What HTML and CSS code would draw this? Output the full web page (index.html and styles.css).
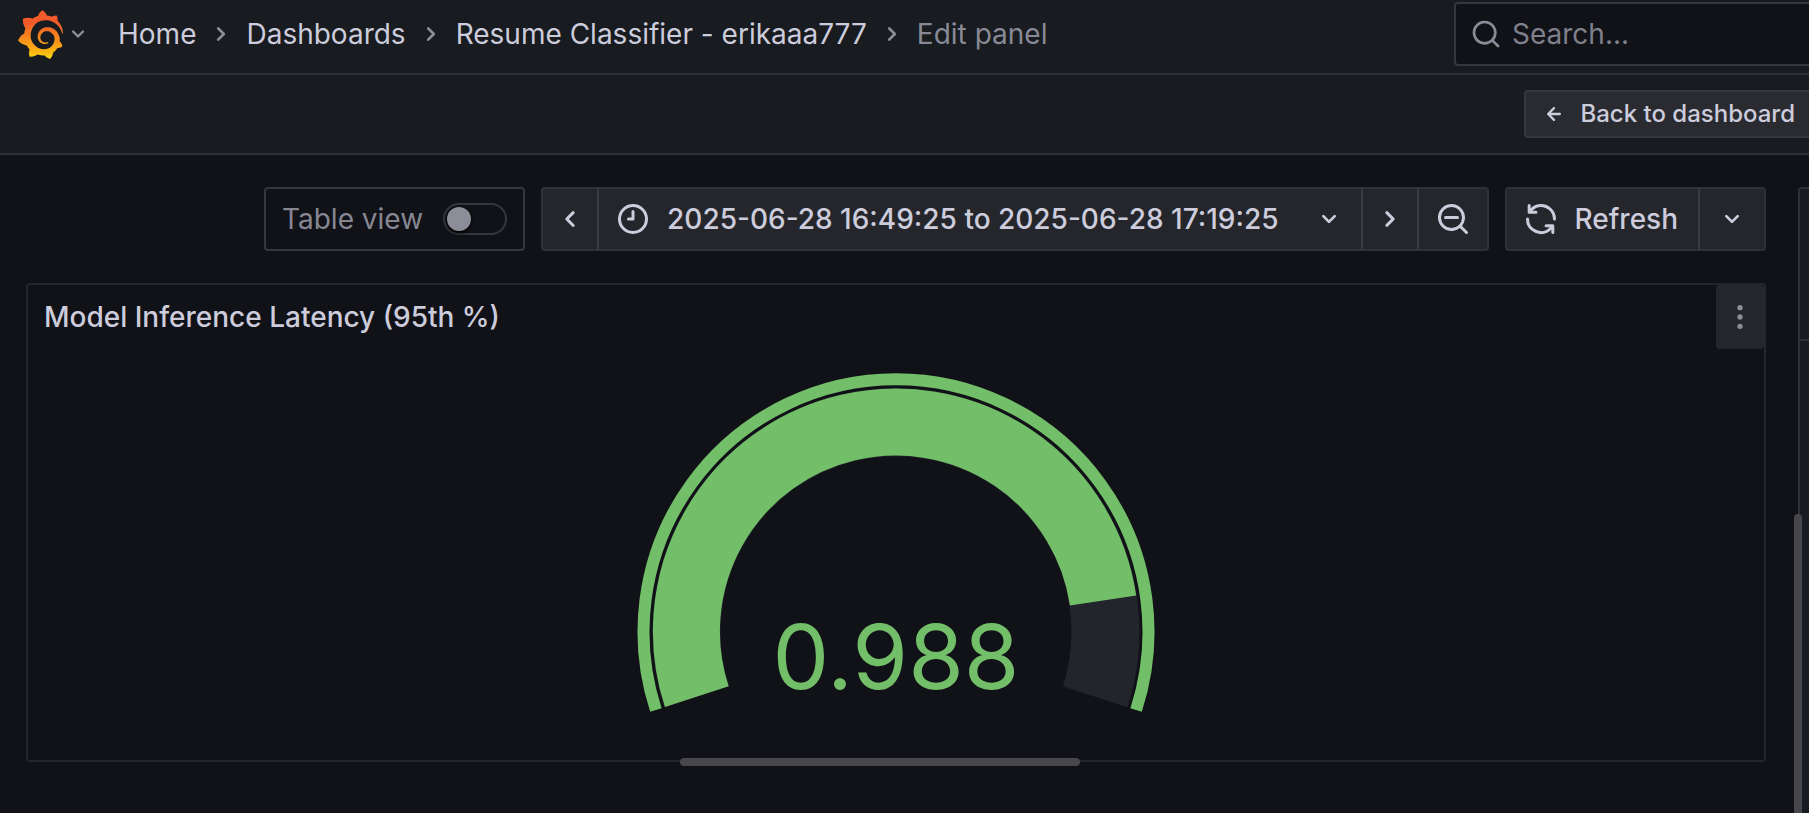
FILE: index.html
```html
<!DOCTYPE html>
<html lang="en">
<head>
<meta charset="utf-8">
<meta name="viewport" content="width=device-width, initial-scale=1">
<title>Edit panel - Resume Classifier - Grafana</title>
<link rel="stylesheet" href="styles.css">
</head>
<body>
<svg class="sprite" aria-hidden="true">
  <symbol id="angle-down" viewBox="0 0 24 24"><path d="M17,9.17a1,1,0,0,0-1.41,0L12,12.71,8.46,9.17a1,1,0,0,0-1.41,0,1,1,0,0,0,0,1.42l4.24,4.24a1,1,0,0,0,1.42,0L17,10.59A1,1,0,0,0,17,9.17Z"/></symbol>
  <symbol id="angle-right" viewBox="0 0 24 24"><path d="M14.83,11.29,10.59,7.05a1,1,0,0,0-1.42,0,1,1,0,0,0,0,1.41L12.71,12,9.17,15.54a1,1,0,0,0,0,1.41,1,1,0,0,0,.71.29,1,1,0,0,0,.71-.29l4.24-4.24A1,1,0,0,0,14.83,11.29Z"/></symbol>
  <symbol id="angle-left" viewBox="0 0 24 24"><path d="M11.29,12l3.54-3.54a1,1,0,0,0,0-1.41,1,1,0,0,0-1.42,0L9.17,11.29a1,1,0,0,0,0,1.42L13.41,17a1,1,0,0,0,.71.29,1,1,0,0,0,.71-.29,1,1,0,0,0,0-1.41Z"/></symbol>
  <symbol id="search" viewBox="0 0 24 24"><path d="M21.71,20.29,18,16.61A9,9,0,1,0,16.61,18l3.68,3.68a1,1,0,0,0,1.42,0A1,1,0,0,0,21.71,20.29ZM11,18a7,7,0,1,1,7-7A7,7,0,0,1,11,18Z"/></symbol>
  <symbol id="search-minus" viewBox="0 0 24 24"><path d="M21.71,20.29,18,16.61A9,9,0,1,0,16.61,18l3.68,3.68a1,1,0,0,0,1.42,0A1,1,0,0,0,21.71,20.29ZM11,18a7,7,0,1,1,7-7A7,7,0,0,1,11,18Zm4-8H7a1,1,0,0,0,0,2h8a1,1,0,0,0,0-2Z"/></symbol>
  <symbol id="clock" viewBox="0 0 24 24"><path d="M12,6a1,1,0,0,0-1,1v4H9a1,1,0,0,0,0,2h3a1,1,0,0,0,1-1V7A1,1,0,0,0,12,6Zm0-4A10,10,0,1,0,22,12,10,10,0,0,0,12,2Zm0,18a8,8,0,1,1,8-8A8,8,0,0,1,12,20Z"/></symbol>
  <symbol id="sync" viewBox="0 0 24 24"><path d="M19.91,15.51H15.38a1,1,0,0,0,0,2h2.4A8,8,0,0,1,4,12a1,1,0,1,0-2,0,10,10,0,0,0,16.88,7.23V21a1,1,0,0,0,2,0V16.5A1,1,0,0,0,19.91,15.51ZM12,2A10,10,0,0,0,5.12,4.77V3a1,1,0,0,0-2,0V7.5a1,1,0,0,0,1,1h4.5a1,1,0,0,0,0-2H6.22A8,8,0,0,1,20,12a1,1,0,0,0,2,0A10,10,0,0,0,12,2Z"/></symbol>
  <symbol id="arrow-left" viewBox="0 0 24 24"><path d="M17,11H9.41l3.3-3.29a1,1,0,1,0-1.42-1.42l-5,5a1,1,0,0,0-.21.33,1,1,0,0,0,0,.76,1,1,0,0,0,.21.33l5,5a1,1,0,0,0,1.42,0,1,1,0,0,0,0-1.42L9.41,13H17a1,1,0,0,0,0-2Z"/></symbol>
  <symbol id="ellipsis" viewBox="0 0 24 24"><circle cx="12" cy="5" r="2"/><circle cx="12" cy="12" r="2"/><circle cx="12" cy="19" r="2"/></symbol>
</svg>

<header class="topbar">
  <button class="home-menu" type="button" aria-label="Open menu">
    <svg class="logo" viewBox="0 0 351 365" aria-hidden="true">
      <defs><linearGradient id="flame" gradientUnits="userSpaceOnUse" x1="175" y1="390" x2="175" y2="100"><stop offset="0" stop-color="#fcee1f"/><stop offset="0.25" stop-color="#fbb910"/><stop offset="1" stop-color="#f15b2a"/></linearGradient></defs>
      <path fill="url(#flame)" d="M342,161.2c-0.6-6.1-1.6-13.1-3.6-20.9c-2-7.7-5-16.2-9.4-25c-4.4-8.8-10.1-17.9-17.5-26.8c-2.9-3.5-6.1-6.9-9.5-10.2c5.1-20.3-6.2-37.9-6.2-37.9c-19.5-1.2-31.9,6.1-36.5,9.4c-0.8-0.3-1.5-0.7-2.3-1c-3.3-1.3-6.7-2.6-10.3-3.7c-3.5-1.1-7.1-2.1-10.8-3c-3.7-0.9-7.4-1.6-11.2-2.2c-0.7-0.1-1.3-0.2-2-0.3c-8.5-27.2-32.9-38.6-32.9-38.6c-27.3,17.3-32.4,41.5-32.4,41.5s-0.1,0.5-0.3,1.4c-1.5,0.4-3,0.9-4.5,1.3c-2.1,0.6-4.2,1.4-6.2,2.2c-2.1,0.8-4.1,1.6-6.2,2.5c-4.1,1.8-8.2,3.8-12.2,6c-3.9,2.2-7.7,4.6-11.4,7.1c-0.5-0.2-1-0.4-1-0.4c-37.8-14.4-71.3,2.9-71.3,2.9c-3.1,40.2,15.1,65.5,18.7,70.1c-0.9,2.5-1.7,5-2.5,7.5c-2.8,9.1-4.9,18.4-6.2,28.1c-0.2,1.4-0.4,2.8-0.5,4.2C18.8,192.7,8.5,228,8.5,228c29.1,33.5,63.1,35.6,63.1,35.6c0,0,0.1-0.1,0.1-0.1c4.3,7.7,9.3,15,14.9,21.9c2.4,2.9,4.8,5.6,7.4,8.3c-10.6,30.4,1.5,55.6,1.5,55.6c32.4,1.2,53.7-14.2,58.2-17.7c3.2,1.1,6.5,2.1,9.8,2.9c10,2.6,20.2,4.1,30.4,4.5c2.5,0.1,5.1,0.2,7.6,0.1l1.2,0l0.8,0l1.6,0l1.6-0.1l0,0.1c15.3,21.8,42.1,24.9,42.1,24.9c19.1-20.1,20.2-40.1,20.2-44.4l0,0c0,0,0-0.1,0-0.3c0-0.4,0-0.6,0-0.6l0,0c0-0.3,0-0.6,0-0.9c4-2.8,7.8-5.8,11.4-9.1c7.6-6.9,14.3-14.8,19.9-23.3c0.5-0.8,1-1.6,1.5-2.4c21.6,1.2,36.9-13.4,36.9-13.4c-3.6-22.5-16.4-33.5-19.1-35.6l0,0c0,0-0.1-0.1-0.3-0.2c-0.2-0.1-0.2-0.2-0.2-0.2c0,0,0,0,0,0c-0.1-0.1-0.3-0.2-0.5-0.3c0.1-1.4,0.2-2.7,0.3-4.1c0.2-2.4,0.2-4.9,0.2-7.3l0-1.8l0-0.9l0-0.5c0-0.6,0-0.4,0-0.6l-0.1-1.5l-0.1-2c0-0.7-0.1-1.3-0.2-1.9c-0.1-0.6-0.1-1.3-0.2-1.9l-0.2-1.9l-0.3-1.9c-0.4-2.5-0.8-4.9-1.4-7.4c-2.3-9.7-6.1-18.9-11-27.2c-5-8.3-11.2-15.6-18.3-21.8c-7-6.2-14.9-11.2-23.1-14.9c-8.3-3.7-16.9-6.1-25.5-7.2c-4.3-0.6-8.6-0.8-12.9-0.7l-1.6,0l-0.4,0c-0.1,0-0.6,0-0.5,0l-0.7,0l-1.6,0.1c-0.6,0-1.2,0.1-1.7,0.1c-2.2,0.2-4.4,0.5-6.5,0.9c-8.6,1.6-16.7,4.7-23.8,9c-7.1,4.3-13.3,9.6-18.3,15.6c-5,6-8.9,12.7-11.6,19.6c-2.7,6.9-4.2,14.1-4.6,21c-0.1,1.7-0.1,3.5-0.1,5.2c0,0.4,0,0.9,0,1.3l0.1,1.4c0.1,0.8,0.1,1.7,0.2,2.5c0.3,3.5,1,6.9,1.9,10.1c1.9,6.5,4.9,12.4,8.6,17.4c3.7,5,8.2,9.1,12.9,12.4c4.7,3.2,9.8,5.5,14.8,7c5,1.5,10,2.1,14.7,2.1c0.6,0,1.2,0,1.7,0c0.3,0,0.6,0,0.9,0c0.3,0,0.6,0,0.9-0.1c0.5,0,1-0.1,1.5-0.1c0.1,0,0.3,0,0.4-0.1l0.5-0.1c0.3,0,0.6-0.1,0.9-0.1c0.6-0.1,1.1-0.2,1.7-0.3c0.6-0.1,1.1-0.2,1.6-0.4c1.1-0.2,2.1-0.6,3.1-0.9c2-0.7,4-1.5,5.7-2.4c1.8-0.9,3.4-2,5-3c0.4-0.3,0.9-0.6,1.3-1c1.6-1.3,1.9-3.7,0.6-5.3c-1.1-1.4-3.1-1.8-4.7-0.9c-0.4,0.2-0.8,0.4-1.2,0.6c-1.4,0.7-2.8,1.3-4.3,1.8c-1.5,0.5-3.1,0.9-4.7,1.2c-0.8,0.1-1.6,0.2-2.5,0.3c-0.4,0-0.8,0.1-1.3,0.1c-0.4,0-0.9,0-1.2,0c-0.4,0-0.8,0-1.2,0c-0.5,0-1,0-1.5-0.1c0,0-0.3,0-0.1,0l-0.2,0l-0.3,0c-0.2,0-0.5,0-0.7-0.1c-0.5-0.1-0.9-0.1-1.4-0.2c-3.7-0.5-7.4-1.6-10.9-3.2c-3.6-1.6-7-3.8-10.1-6.6c-3.1-2.8-5.8-6.1-7.9-9.9c-2.1-3.8-3.6-8-4.3-12.4c-0.3-2.2-0.5-4.5-0.4-6.7c0-0.6,0.1-1.2,0.1-1.8c0,0.2,0-0.1,0-0.1l0-0.2l0-0.5c0-0.3,0.1-0.6,0.1-0.9c0.1-1.2,0.3-2.4,0.5-3.6c1.7-9.6,6.5-19,13.9-26.1c1.9-1.8,3.9-3.4,6-4.9c2.1-1.5,4.4-2.8,6.8-3.9c2.4-1.1,4.8-2,7.4-2.7c2.5-0.7,5.1-1.1,7.8-1.4c1.3-0.1,2.6-0.2,4-0.2c0.4,0,0.6,0,0.9,0l1.1,0l0.7,0c0.3,0,0,0,0.1,0l0.3,0l1.1,0.1c2.9,0.2,5.7,0.6,8.5,1.3c5.6,1.2,11.1,3.3,16.2,6.1c10.2,5.7,18.9,14.5,24.2,25.1c2.7,5.3,4.6,11,5.5,16.9c0.2,1.5,0.4,3,0.5,4.5l0.1,1.1l0.1,1.1c0,0.4,0,0.8,0,1.1c0,0.4,0,0.8,0,1.1l0,1l0,1.1c0,0.7-0.1,1.9-0.1,2.6c-0.1,1.6-0.3,3.3-0.5,4.9c-0.2,1.6-0.5,3.2-0.8,4.8c-0.3,1.6-0.7,3.2-1.1,4.7c-0.8,3.1-1.8,6.2-3,9.3c-2.4,6-5.6,11.8-9.4,17.1c-7.7,10.6-18.2,19.2-30.2,24.7c-6,2.7-12.3,4.7-18.8,5.7c-3.2,0.6-6.5,0.9-9.8,1l-0.6,0l-0.5,0l-1.1,0l-1.6,0l-0.8,0c0.4,0-0.1,0-0.1,0l-0.3,0c-1.8,0-3.5-0.1-5.3-0.3c-7-0.5-13.9-1.8-20.7-3.7c-6.7-1.9-13.2-4.6-19.4-7.8c-12.3-6.6-23.4-15.6-32-26.5c-4.3-5.4-8.1-11.3-11.2-17.4c-3.1-6.1-5.6-12.6-7.4-19.1c-1.8-6.6-2.9-13.3-3.4-20.1l-0.1-1.3l0-0.3l0-0.3l0-0.6l0-1.1l0-0.3l0-0.4l0-0.8l0-1.6l0-0.3c0,0,0,0.1,0-0.1l0-0.6c0-0.8,0-1.7,0-2.5c0.1-3.3,0.4-6.8,0.8-10.2c0.4-3.4,1-6.9,1.7-10.3c0.7-3.4,1.5-6.8,2.5-10.2c1.9-6.7,4.3-13.2,7.1-19.3c5.7-12.2,13.1-23.1,22-31.8c2.2-2.2,4.5-4.2,6.9-6.2c2.4-1.9,4.9-3.7,7.5-5.4c2.5-1.7,5.2-3.2,7.9-4.6c1.3-0.7,2.7-1.4,4.1-2c0.7-0.3,1.4-0.6,2.1-0.9c0.7-0.3,1.4-0.6,2.1-0.9c2.8-1.2,5.7-2.2,8.7-3.1c0.7-0.2,1.5-0.4,2.2-0.7c0.7-0.2,1.5-0.4,2.2-0.6c1.5-0.4,3-0.8,4.5-1.1c0.7-0.2,1.5-0.3,2.3-0.5c0.8-0.2,1.5-0.3,2.3-0.5c0.8-0.1,1.5-0.3,2.3-0.4l1.1-0.2l1.2-0.2c0.8-0.1,1.5-0.2,2.3-0.3c0.9-0.1,1.7-0.2,2.6-0.3c0.7-0.1,1.9-0.2,2.6-0.3c0.5-0.1,1.1-0.1,1.6-0.2l1.1-0.1l0.5-0.1l0.6,0c0.9-0.1,1.7-0.1,2.6-0.2l1.3-0.1c0,0,0.5,0,0.1,0l0.3,0l0.6,0c0.7,0,1.5-0.1,2.2-0.1c2.9-0.1,5.9-0.1,8.8,0c5.8,0.2,11.5,0.9,17,1.9c11.1,2.1,21.5,5.6,31,10.3c9.5,4.6,17.9,10.3,25.3,16.5c0.5,0.4,0.9,0.8,1.4,1.2c0.4,0.4,0.9,0.8,1.3,1.2c0.9,0.8,1.7,1.6,2.6,2.4c0.9,0.8,1.7,1.6,2.5,2.4c0.8,0.8,1.6,1.6,2.4,2.5c3.1,3.3,6,6.6,8.6,10c5.2,6.7,9.4,13.5,12.7,19.9c0.2,0.4,0.4,0.8,0.6,1.2c0.2,0.4,0.4,0.8,0.6,1.2c0.4,0.8,0.8,1.6,1.1,2.4c0.4,0.8,0.7,1.5,1.1,2.3c0.3,0.8,0.7,1.5,1,2.3c1.2,3,2.4,5.9,3.3,8.6c1.5,4.4,2.6,8.3,3.5,11.7c0.3,1.4,1.6,2.3,3,2.1c1.5-0.1,2.6-1.3,2.6-2.8C342.6,170.4,342.5,166.1,342,161.2z"/>
    </svg>
    <svg class="icon icon-sm"><use href="#angle-down"/></svg>
  </button>
  <nav class="crumbs" aria-label="Breadcrumbs">
    <a class="crumb" href="#home">Home</a>
    <svg class="icon icon-md"><use href="#angle-right"/></svg>
    <a class="crumb" href="#dashboards">Dashboards</a>
    <svg class="icon icon-md"><use href="#angle-right"/></svg>
    <a class="crumb" href="#dashboard">Resume Classifier - erikaaa777</a>
    <svg class="icon icon-md"><use href="#angle-right"/></svg>
    <span class="crumb crumb-current" aria-current="page">Edit panel</span>
  </nav>
  <label class="search">
    <svg class="icon icon-md"><use href="#search"/></svg>
    <input class="search-input" type="text" placeholder="Search..." aria-label="Search">
  </label>
</header>

<div class="actionbar">
  <button class="back" type="button"><svg class="icon icon-sm"><use href="#arrow-left"/></svg>Back to dashboard</button>
</div>

<div class="editor">
  <main class="main">
    <div class="toolbar">
      <label class="table-view">Table view<input class="switch" type="checkbox" role="switch"></label>
      <div class="group">
        <button class="btn btn-step" type="button" aria-label="Move time range backwards"><svg class="icon icon-lg"><use href="#angle-left"/></svg></button>
        <button class="btn btn-range" type="button"><svg class="icon icon-lg"><use href="#clock"/></svg><span class="range">2025-06-28 16:49:25 to 2025-06-28 17:19:25</span><svg class="icon icon-md"><use href="#angle-down"/></svg></button>
        <button class="btn btn-step" type="button" aria-label="Move time range forwards"><svg class="icon icon-lg"><use href="#angle-right"/></svg></button>
        <button class="btn btn-zoom" type="button" aria-label="Zoom out time range"><svg class="icon icon-lg"><use href="#search-minus"/></svg></button>
      </div>
      <div class="group">
        <button class="btn btn-refresh" type="button"><svg class="icon icon-lg"><use href="#sync"/></svg>Refresh</button>
        <button class="btn btn-interval" type="button" aria-label="Auto refresh interval"><svg class="icon icon-md"><use href="#angle-down"/></svg></button>
      </div>
    </div>

    <section class="panel">
      <div class="panel-head">
        <h2 class="panel-title">Model Inference Latency (95th %)</h2>
        <button class="panel-menu" type="button" aria-label="Panel menu"><svg class="icon icon-md"><use href="#ellipsis"/></svg></button>
      </div>
      <div class="panel-body">
        <svg class="gauge" viewBox="-260 -283 520 411" role="img" aria-label="Gauge reading 0.988">
          <path class="gauge-ring" d="M-240.1 78A252.5 252.5 0 1 1 240.1 78"/>
          <path class="gauge-track" d="M-199.2 64.7A209.5 209.5 0 1 1 199.2 64.7"/>
          <path class="gauge-fill" d="M-199.2 64.7A209.5 209.5 0 1 1 207.1 -31.5"/>
          <text class="gauge-value" x="0" y="57">0.988</text>
        </svg>
      </div>
      <div class="splitter-h"></div>
    </section>
  </main>
  <aside class="options">
    <div class="options-head"></div>
    <div class="splitter-v"></div>
  </aside>
</div>
</body>
</html>
```

FILE: styles.css
```css
:root {
  --canvas: #111217;
  --primary: #181b1f;
  --text: rgb(204, 204, 220);
  --muted: rgba(204, 204, 220, 0.65);
  --line: rgba(204, 204, 220, 0.12);
  --line-medium: rgba(204, 204, 220, 0.2);
  --button: #24262b;
  --button-line: #303137;
  --green: #73bf69;
}

* {
  box-sizing: border-box;
}

body {
  margin: 0;
  min-height: 100vh;
  display: flex;
  flex-direction: column;
  overflow: hidden;
  background: var(--canvas);
  color: var(--text);
  font: 400 28px/44px Inter, "Liberation Sans", sans-serif;
}

button,
input {
  margin: 0;
  font: inherit;
  color: inherit;
}

.sprite {
  display: none;
}

.icon {
  flex: none;
  display: block;
  fill: currentColor;
}

.icon-sm {
  width: 28px;
  height: 28px;
}

.icon-md {
  width: 32px;
  height: 32px;
}

.icon-lg {
  width: 36px;
  height: 36px;
}

/* Top bar */
.topbar {
  display: flex;
  align-items: center;
  padding: 2px 0 7px 17px;
  background: var(--primary);
  border-bottom: 2px solid var(--line);
}

.home-menu {
  display: flex;
  align-items: center;
  padding: 0;
  border: 0;
  background: none;
  color: var(--muted);
}

.logo {
  width: 47px;
  height: 49px;
}

.crumbs {
  display: flex;
  align-items: center;
  gap: 9px;
  margin-left: 26px;
  color: var(--muted);
  white-space: nowrap;
}

.crumb {
  color: var(--text);
  text-decoration: none;
}

.crumb-current {
  color: var(--muted);
}

.search {
  display: flex;
  align-items: center;
  gap: 10px;
  width: 355px;
  height: 64px;
  margin-left: auto;
  padding-left: 14px;
  background: var(--canvas);
  border: 2px solid var(--line-medium);
  border-right: 0;
  border-radius: 4px 0 0 4px;
  color: var(--muted);
}

.search-input {
  flex: 1;
  min-width: 0;
  padding: 0;
  border: 0;
  outline: 0;
  background: none;
}

.search-input::placeholder {
  color: #7f808b;
  opacity: 1;
}

/* Action bar */
.actionbar {
  display: flex;
  justify-content: flex-end;
  padding: 15px 0;
  background: var(--primary);
  border-bottom: 2px solid var(--line);
}

.back {
  display: flex;
  align-items: center;
  gap: 12px;
  height: 48px;
  padding: 0 14px;
  border: 2px solid #36373d;
  border-right: 0;
  border-radius: 4px 0 0 4px;
  background: #2a2b31;
  font-size: 24px;
  font-weight: 500;
  white-space: nowrap;
}

/* Editor */
.editor {
  flex: 1;
  display: flex;
  gap: 32px;
  padding: 32px 0 0 26px;
}

.main {
  flex: 1;
  min-width: 0;
  display: flex;
  flex-direction: column;
  gap: 32px;
  padding-bottom: 51px;
}

.toolbar {
  display: flex;
  justify-content: flex-end;
  gap: 16px;
  white-space: nowrap;
}

.table-view {
  display: flex;
  align-items: center;
  gap: 20px;
  height: 64px;
  padding: 0 16px;
  border: 2px solid var(--line-medium);
  border-radius: 4px;
  color: var(--muted);
}

.switch {
  appearance: none;
  display: flex;
  align-items: center;
  width: 64px;
  height: 32px;
  padding: 0 2px;
  border: 2px solid var(--line-medium);
  border-radius: 16px;
}

.switch::before {
  content: "";
  width: 24px;
  height: 24px;
  border-radius: 50%;
  background: #8d8d99;
  box-shadow: 0 2px 4px #000;
}

.switch:checked {
  justify-content: flex-end;
}

.group {
  display: flex;
}

.btn {
  display: flex;
  align-items: center;
  justify-content: center;
  height: 64px;
  padding: 0 16px;
  border: 2px solid var(--button-line);
  background: var(--button);
  font-weight: 500;
}

.btn + .btn {
  border-left-color: #3a3b41;
}

.btn:not(:last-child) {
  border-right: 0;
}

.btn:first-child {
  border-radius: 4px 0 0 4px;
}

.btn:last-child {
  border-radius: 0 4px 4px 0;
}

.btn-step {
  width: 56px;
  padding: 0;
}

.btn-range {
  gap: 16px;
}

.range {
  padding-right: 18px;
}

.btn-zoom {
  width: 72px;
}

.btn-refresh {
  gap: 16px;
  padding-right: 20px;
}

.btn-interval {
  width: 68px;
}

/* Panel */
.panel {
  position: relative;
  flex: 1;
  display: flex;
  flex-direction: column;
  border: 2px solid #24262b;
  border-radius: 4px;
}

.panel-head {
  display: flex;
  align-items: center;
  justify-content: space-between;
  padding-left: 16px;
}

.panel-title {
  margin: 0;
  font-size: 28px;
  font-weight: 500;
}

.panel-menu {
  display: flex;
  align-items: center;
  justify-content: center;
  width: 48px;
  height: 64px;
  padding: 0;
  border: 0;
  border-radius: 4px;
  background: #24262b;
  color: #8d8d99;
}

.panel-body {
  flex: 1;
  display: flex;
  align-items: center;
}

.gauge {
  width: 100%;
  height: 411px;
  fill: none;
}

.gauge-ring {
  stroke: var(--green);
  stroke-width: 12;
}

.gauge-track {
  stroke: #22252b;
  stroke-width: 68;
}

.gauge-fill {
  stroke: var(--green);
  stroke-width: 67;
}

.gauge-value {
  fill: var(--green);
  font-size: 90px;
  text-anchor: middle;
}

/* Drag handles lie over the borders they resize */
.splitter-h {
  position: absolute;
  top: 100%;
  left: 50%;
  width: 400px;
  height: 8px;
  margin: -2px 0 0 -216px;
  border-radius: 4px;
  background: #46464b;
}

.options {
  position: relative;
  width: 11px;
  background: var(--primary);
  border: 2px solid var(--button-line);
  border-width: 2px 0 0 2px;
  border-radius: 4px 0 0 0;
}

.options-head {
  height: 152px;
  border-bottom: 2px solid var(--button-line);
}

.splitter-v {
  position: absolute;
  top: 325px;
  bottom: 0;
  left: -6px;
  width: 8px;
  border-radius: 4px 4px 0 0;
  background: #46464b;
}
```
